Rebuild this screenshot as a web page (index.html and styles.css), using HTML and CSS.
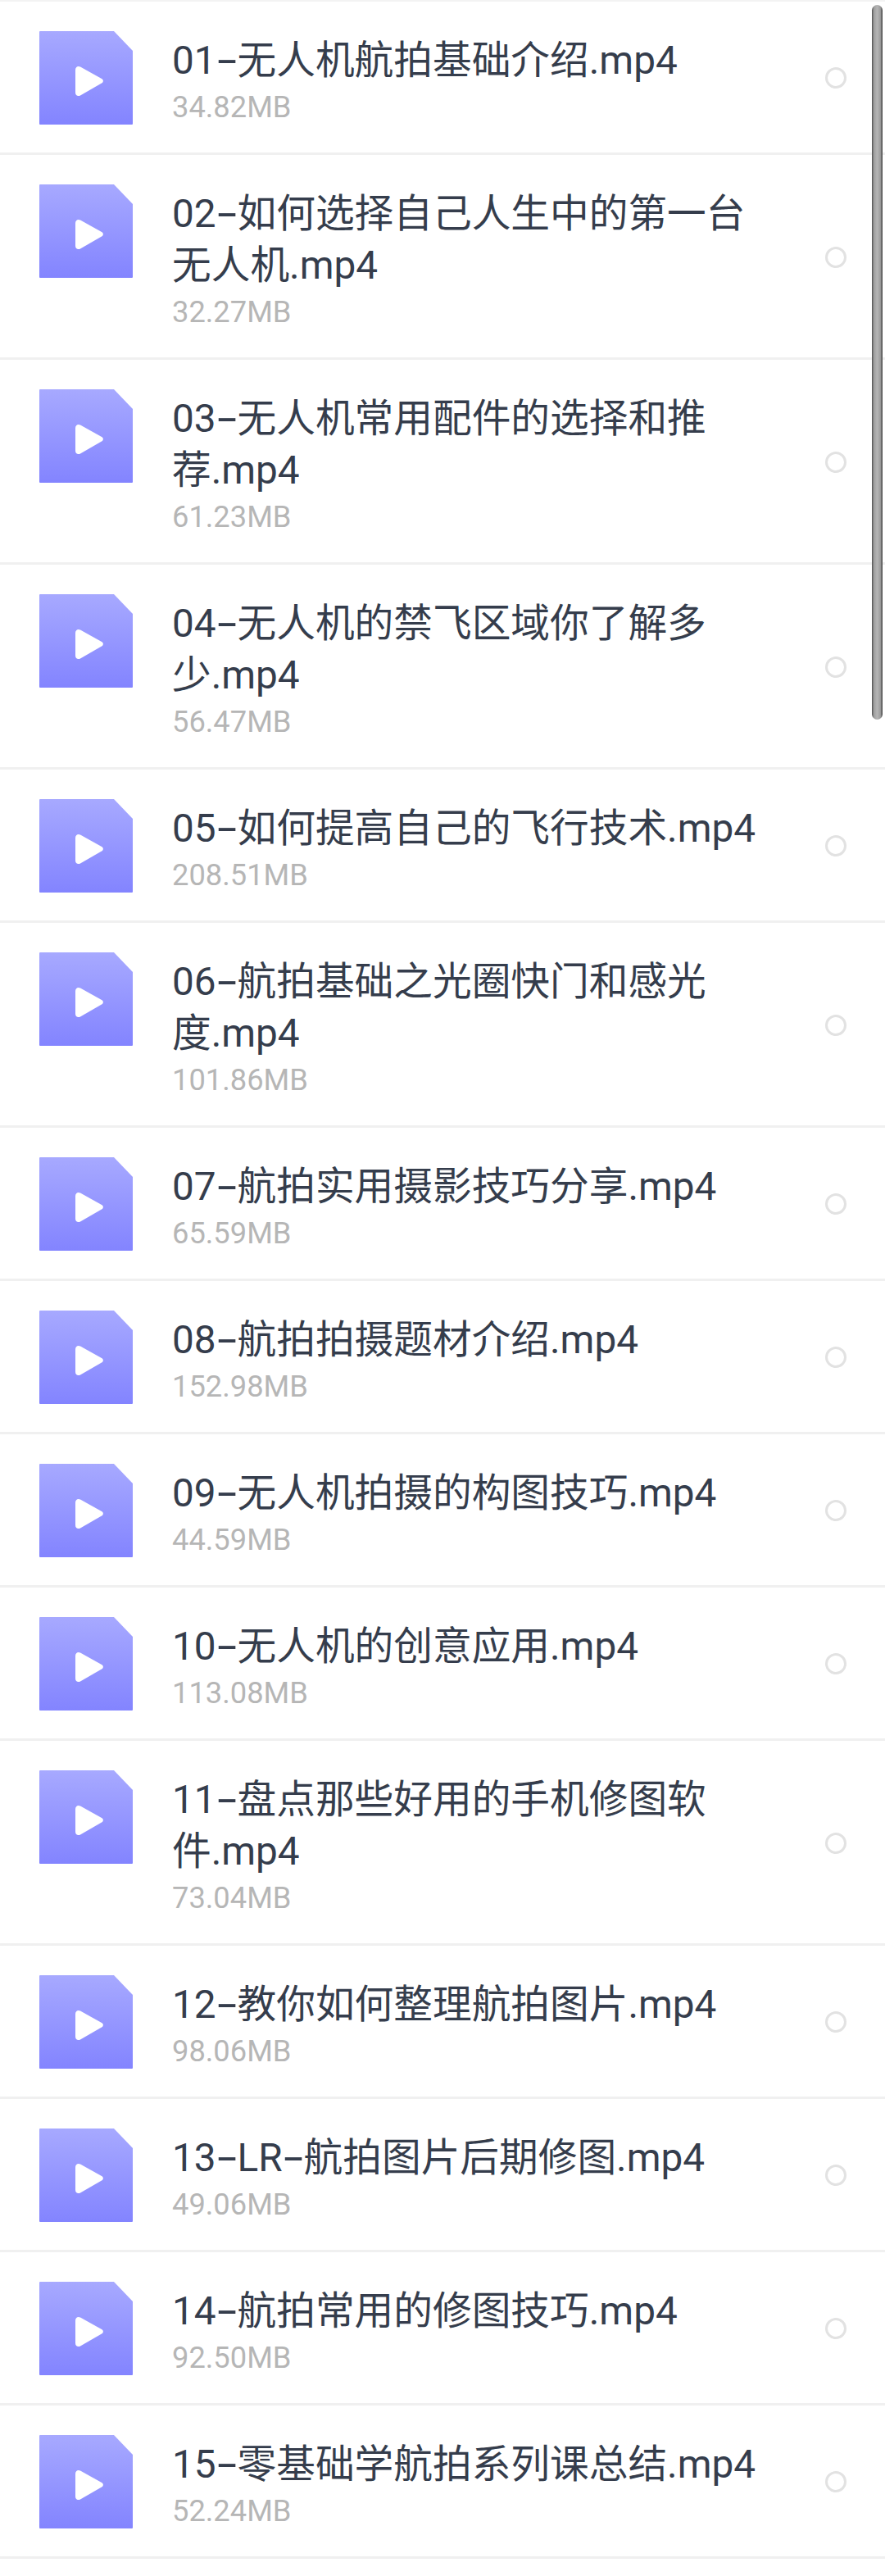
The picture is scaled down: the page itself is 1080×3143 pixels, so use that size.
FILE: index.html
```html
<!DOCTYPE html>
<html lang="zh-CN">
<head>
    <meta name='viewport' content='width=device-width, initial-scale=1'>
    <link rel="stylesheet" href="styles.css">
    <title>文件列表</title>
</head>
<body>
<svg class="defs" width="0" height="0">
    <defs>
        <linearGradient id="fileFill" x1="0" y1="0" x2="0" y2="1">
            <stop offset="0" stop-color="#a7a9ff"/>
            <stop offset="1" stop-color="#8384ff"/>
        </linearGradient>
        <symbol id="fileIcon" viewBox="0 0 114 114">
            <path d="M1 0H91L114 24V113a1 1 0 0 1-1 1H1a1 1 0 0 1-1-1V1a1 1 0 0 1 1-1Z" fill="url(#fileFill)"/>
            <path d="M44 47.5C44 43.500 47 42 50 43.500L76 58C78.500 59.500 78.500 62 76 63.500L50 78.500C47 80 44 78.500 44 75Z" fill="#fff"/>
        </symbol>
    </defs>
</svg>
<main class="fileList">
    <div class="fileRow">
        <svg class="fileIcon"><use href="#fileIcon"/></svg>
        <div class="fileInfo"><div class="fileName">01<span class="dash">-</span>无人机航拍基础介绍.mp4</div><div class="fileSize">34.82MB</div></div>
        <span class="radio"></span>
    </div>
    <div class="fileRow">
        <svg class="fileIcon"><use href="#fileIcon"/></svg>
        <div class="fileInfo"><div class="fileName">02<span class="dash">-</span>如何选择自己人生中的第一台<br>无人机.mp4</div><div class="fileSize">32.27MB</div></div>
        <span class="radio"></span>
    </div>
    <div class="fileRow">
        <svg class="fileIcon"><use href="#fileIcon"/></svg>
        <div class="fileInfo"><div class="fileName">03<span class="dash">-</span>无人机常用配件的选择和推<br>荐.mp4</div><div class="fileSize">61.23MB</div></div>
        <span class="radio"></span>
    </div>
    <div class="fileRow">
        <svg class="fileIcon"><use href="#fileIcon"/></svg>
        <div class="fileInfo"><div class="fileName">04<span class="dash">-</span>无人机的禁飞区域你了解多<br>少.mp4</div><div class="fileSize">56.47MB</div></div>
        <span class="radio"></span>
    </div>
    <div class="fileRow">
        <svg class="fileIcon"><use href="#fileIcon"/></svg>
        <div class="fileInfo"><div class="fileName">05<span class="dash">-</span>如何提高自己的飞行技术.mp4</div><div class="fileSize">208.51MB</div></div>
        <span class="radio"></span>
    </div>
    <div class="fileRow">
        <svg class="fileIcon"><use href="#fileIcon"/></svg>
        <div class="fileInfo"><div class="fileName">06<span class="dash">-</span>航拍基础之光圈快门和感光<br>度.mp4</div><div class="fileSize">101.86MB</div></div>
        <span class="radio"></span>
    </div>
    <div class="fileRow">
        <svg class="fileIcon"><use href="#fileIcon"/></svg>
        <div class="fileInfo"><div class="fileName">07<span class="dash">-</span>航拍实用摄影技巧分享.mp4</div><div class="fileSize">65.59MB</div></div>
        <span class="radio"></span>
    </div>
    <div class="fileRow">
        <svg class="fileIcon"><use href="#fileIcon"/></svg>
        <div class="fileInfo"><div class="fileName">08<span class="dash">-</span>航拍拍摄题材介绍.mp4</div><div class="fileSize">152.98MB</div></div>
        <span class="radio"></span>
    </div>
    <div class="fileRow">
        <svg class="fileIcon"><use href="#fileIcon"/></svg>
        <div class="fileInfo"><div class="fileName">09<span class="dash">-</span>无人机拍摄的构图技巧.mp4</div><div class="fileSize">44.59MB</div></div>
        <span class="radio"></span>
    </div>
    <div class="fileRow">
        <svg class="fileIcon"><use href="#fileIcon"/></svg>
        <div class="fileInfo"><div class="fileName">10<span class="dash">-</span>无人机的创意应用.mp4</div><div class="fileSize">113.08MB</div></div>
        <span class="radio"></span>
    </div>
    <div class="fileRow">
        <svg class="fileIcon"><use href="#fileIcon"/></svg>
        <div class="fileInfo"><div class="fileName">11<span class="dash">-</span>盘点那些好用的手机修图软<br>件.mp4</div><div class="fileSize">73.04MB</div></div>
        <span class="radio"></span>
    </div>
    <div class="fileRow">
        <svg class="fileIcon"><use href="#fileIcon"/></svg>
        <div class="fileInfo"><div class="fileName">12<span class="dash">-</span>教你如何整理航拍图片.mp4</div><div class="fileSize">98.06MB</div></div>
        <span class="radio"></span>
    </div>
    <div class="fileRow">
        <svg class="fileIcon"><use href="#fileIcon"/></svg>
        <div class="fileInfo"><div class="fileName">13<span class="dash">-</span>LR<span class="dash">-</span>航拍图片后期修图.mp4</div><div class="fileSize">49.06MB</div></div>
        <span class="radio"></span>
    </div>
    <div class="fileRow">
        <svg class="fileIcon"><use href="#fileIcon"/></svg>
        <div class="fileInfo"><div class="fileName">14<span class="dash">-</span>航拍常用的修图技巧.mp4</div><div class="fileSize">92.50MB</div></div>
        <span class="radio"></span>
    </div>
    <div class="fileRow">
        <svg class="fileIcon"><use href="#fileIcon"/></svg>
        <div class="fileInfo"><div class="fileName">15<span class="dash">-</span>零基础学航拍系列课总结.mp4</div><div class="fileSize">52.24MB</div></div>
        <span class="radio"></span>
    </div>
</main>
<div class="scrollThumb"></div>
</body>
</html>
```

FILE: styles.css
```css
html, body { margin: 0; padding: 0; background: #fff; }
body { width: 1080px; height: 3143px; overflow: hidden; position: relative; font-family: "Roboto", "Noto Sans CJK SC", sans-serif; }
.defs { position: absolute; }
.fileList { border-top: 2px solid #f3f3f3; }
.fileRow { display: flex; align-items: flex-start; padding: 36px 47px 34px 48px; border-bottom: 3px solid #f0f0f0; }
.fileIcon { width: 114px; height: 114px; flex: none; }
.fileInfo { flex: 1; margin-left: 48px; }
.fileName { font-size: 47.700px; line-height: 63px; color: #353d4c; margin-top: 5px; }
.dash { display: inline-block; line-height: 0; font-family: "Inter", sans-serif; margin: 0 2px; transform: scaleX(1.35); }
.fileSize { font-size: 36.300px; line-height: 43px; color: #b6b6b6; margin-top: 3px; }
.radio { flex: none; align-self: center; width: 20px; height: 20px; border: 3px solid #e2e2e2; border-radius: 50%; }
.scrollThumb { position: absolute; left: 1064px; top: 6px; width: 13px; height: 872px; border-radius: 7px; background: linear-gradient(to right, #4d4d4d 0, #a0a0a0 20%, #b4b4b4 50%, #9c9c9c 80%, #3a3a3a 100%); }
```
